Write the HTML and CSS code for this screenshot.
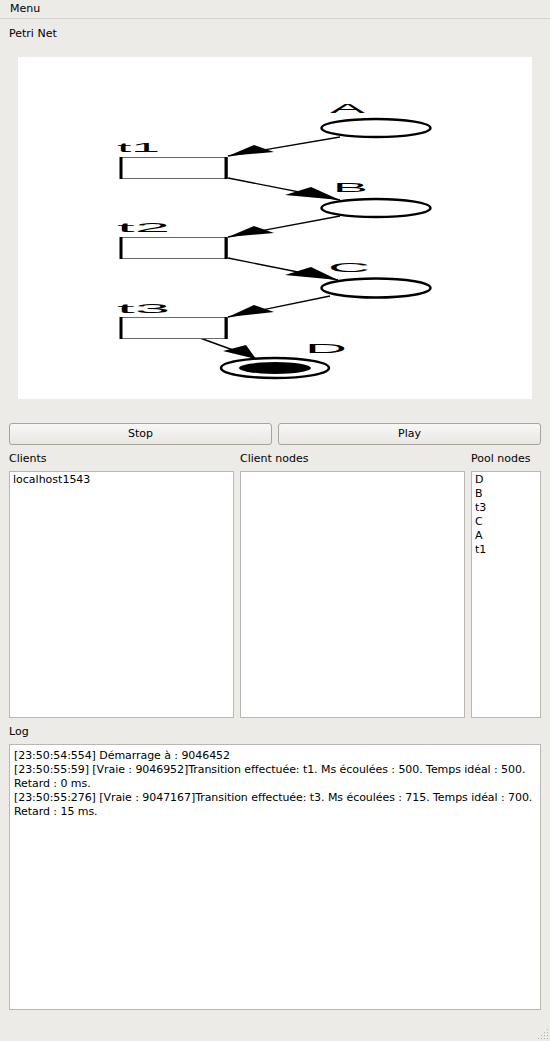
FILE: index.html
```html
<!DOCTYPE html>
<html>
<head>
<meta charset="utf-8">
<link rel="stylesheet" href="styles.css">
</head>
<body>
<div class="menubar"><span class="menu">Menu</span></div>
<main class="content">
  <div class="section-label">Petri Net</div>
  <div class="canvas">
    <svg class="net" viewBox="18 57 514 342" width="514" height="342">
      <g class="arcs">
        <line x1="340" y1="137" x2="228" y2="156"/>
        <line x1="228" y1="178" x2="340" y2="200"/>
        <line x1="340" y1="216" x2="228" y2="237"/>
        <line x1="228" y1="258" x2="338" y2="280"/>
        <line x1="330" y1="296" x2="228" y2="317"/>
        <line x1="200" y1="338" x2="255" y2="358"/>
      </g>
      <g class="heads">
        <polygon points="228,156 254,145 274,152"/>
        <polygon points="340,200 311,187 285,195"/>
        <polygon points="228,237 254,226 274,233"/>
        <polygon points="338,280 311,267 285,275"/>
        <polygon points="228,317 254,305 274,312"/>
        <polygon points="256,359 246,345 223,351"/>
      </g>
      <g class="places">
        <ellipse cx="376" cy="128" rx="54.5" ry="9"/>
        <ellipse cx="376" cy="208" rx="54.5" ry="9"/>
        <ellipse cx="376" cy="288" rx="54.5" ry="9.5"/>
        <ellipse cx="275" cy="368" rx="54" ry="10"/>
        <ellipse class="token" cx="275" cy="368" rx="36" ry="6"/>
      </g>
      <g class="transitions">
        <rect x="120.5" y="157.5" width="107" height="21"/>
        <rect x="120.5" y="237.5" width="107" height="21"/>
        <rect x="120.5" y="317.5" width="107" height="21"/>
      </g>
      <g class="bars">
        <line x1="121" y1="157" x2="121" y2="179"/>
        <line x1="226" y1="157" x2="226" y2="179"/>
        <line x1="121" y1="237" x2="121" y2="259"/>
        <line x1="226" y1="237" x2="226" y2="259"/>
        <line x1="121" y1="317" x2="121" y2="339"/>
        <line x1="226" y1="317" x2="226" y2="339"/>
      </g>
      <g class="labels">
        <text x="330" y="113" textLength="35" lengthAdjust="spacingAndGlyphs">A</text>
        <text x="333" y="192" textLength="35" lengthAdjust="spacingAndGlyphs">B</text>
        <text x="328" y="272" textLength="42" lengthAdjust="spacingAndGlyphs">C</text>
        <text x="305" y="353" textLength="42" lengthAdjust="spacingAndGlyphs">D</text>
        <text x="117" y="152" textLength="43" lengthAdjust="spacingAndGlyphs">t1</text>
        <text x="117" y="232" textLength="53" lengthAdjust="spacingAndGlyphs">t2</text>
        <text x="117" y="313" textLength="53" lengthAdjust="spacingAndGlyphs">t3</text>
      </g>
    </svg>
  </div>
  <div class="buttons">
    <button class="btn">Stop</button>
    <button class="btn">Play</button>
  </div>
  <div class="lists">
    <div class="label">Clients</div>
    <div class="label">Client nodes</div>
    <div class="label">Pool nodes</div>
    <ul class="list"><li>localhost1543</li></ul>
    <ul class="list"></ul>
    <ul class="list pool"><li>D</li><li>B</li><li>t3</li><li>C</li><li>A</li><li>t1</li></ul>
  </div>
  <div class="section-label log-label">Log</div>
  <div class="log">
    <div>[23:50:54:554] Démarrage à : 9046452</div>
    <div>[23:50:55:59] [Vraie : 9046952]Transition effectuée: t1. Ms écoulées : 500. Temps idéal : 500. Retard : 0 ms.</div>
    <div>[23:50:55:276] [Vraie : 9047167]Transition effectuée: t3. Ms écoulées : 715. Temps idéal : 700. Retard : 15 ms.</div>
  </div>
</main>
<svg class="grip" width="12" height="12" viewBox="0 0 12 12">
  <g fill="#b3aea8">
    <rect x="10" y="1" width="1" height="1"/>
    <rect x="7" y="4" width="1" height="1"/><rect x="10" y="4" width="1" height="1"/>
    <rect x="4" y="7" width="1" height="1"/><rect x="7" y="7" width="1" height="1"/><rect x="10" y="7" width="1" height="1"/>
    <rect x="1" y="10" width="1" height="1"/><rect x="4" y="10" width="1" height="1"/><rect x="7" y="10" width="1" height="1"/><rect x="10" y="10" width="1" height="1"/>
  </g>
</svg>
</body>
</html>
```
FILE: styles.css
```css
html, body {
  margin: 0;
  padding: 0;
}
body {
  width: 550px;
  height: 1041px;
  background: #edebe7;
  font-family: "DejaVu Sans", sans-serif;
  font-size: 11px;
  line-height: 14px;
  color: #000;
  position: relative;
  overflow: hidden;
}
.menubar {
  height: 18px;
  border-bottom: 1px solid #d6d2cd;
  box-sizing: content-box;
  padding-left: 10px;
}
.menu {
  display: inline-block;
  padding-top: 2px;
}
.content {
  padding: 0 9px;
  display: flex;
  flex-direction: column;
}
.section-label {
  margin-top: 8px;
  height: 14px;
}
.canvas {
  margin-top: 16px;
  margin-left: 9px;
  width: 514px;
  height: 342px;
  background: #fff;
}
.net {
  display: block;
}
.arcs line {
  stroke: #000;
  stroke-width: 1.4;
}
.heads polygon {
  fill: #000;
}
.places ellipse {
  fill: #fff;
  stroke: #000;
  stroke-width: 2.4;
}
.places .token {
  fill: #000;
  stroke: none;
}
.transitions rect {
  fill: #fff;
  stroke: #6a6a6a;
  stroke-width: 1;
}
.bars line {
  stroke: #000;
  stroke-width: 3;
}
.labels text {
  font-family: "Liberation Sans", sans-serif;
  font-size: 13px;
  fill: #000;
}
.buttons {
  margin-top: 24px;
  display: grid;
  grid-template-columns: 1fr 1fr;
  column-gap: 6px;
}
.btn {
  height: 22px;
  margin: 0;
  padding: 0;
  font: inherit;
  color: #000;
  border: 1px solid #a8a39d;
  border-radius: 3px;
  background: linear-gradient(#f8f7f6, #e9e7e4);
}
.lists {
  margin-top: 7px;
  display: grid;
  grid-template-columns: 225px 225px 70px;
  column-gap: 6px;
  row-gap: 5px;
}
.label {
  height: 14px;
}
.list {
  margin: 0;
  padding: 1px 0 0 3px;
  list-style: none;
  height: 244px;
  background: #fff;
  border: 1px solid #bab6b1;
}
.log-label {
  margin-top: 7px;
}
.log {
  margin-top: 5px;
  height: 257px;
  padding: 4px 1px 3px 4px;
  letter-spacing: -0.06px;
  background: #fff;
  border: 1px solid #bab6b1;
}
.grip {
  position: absolute;
  right: 1px;
  bottom: 1px;
}
```
